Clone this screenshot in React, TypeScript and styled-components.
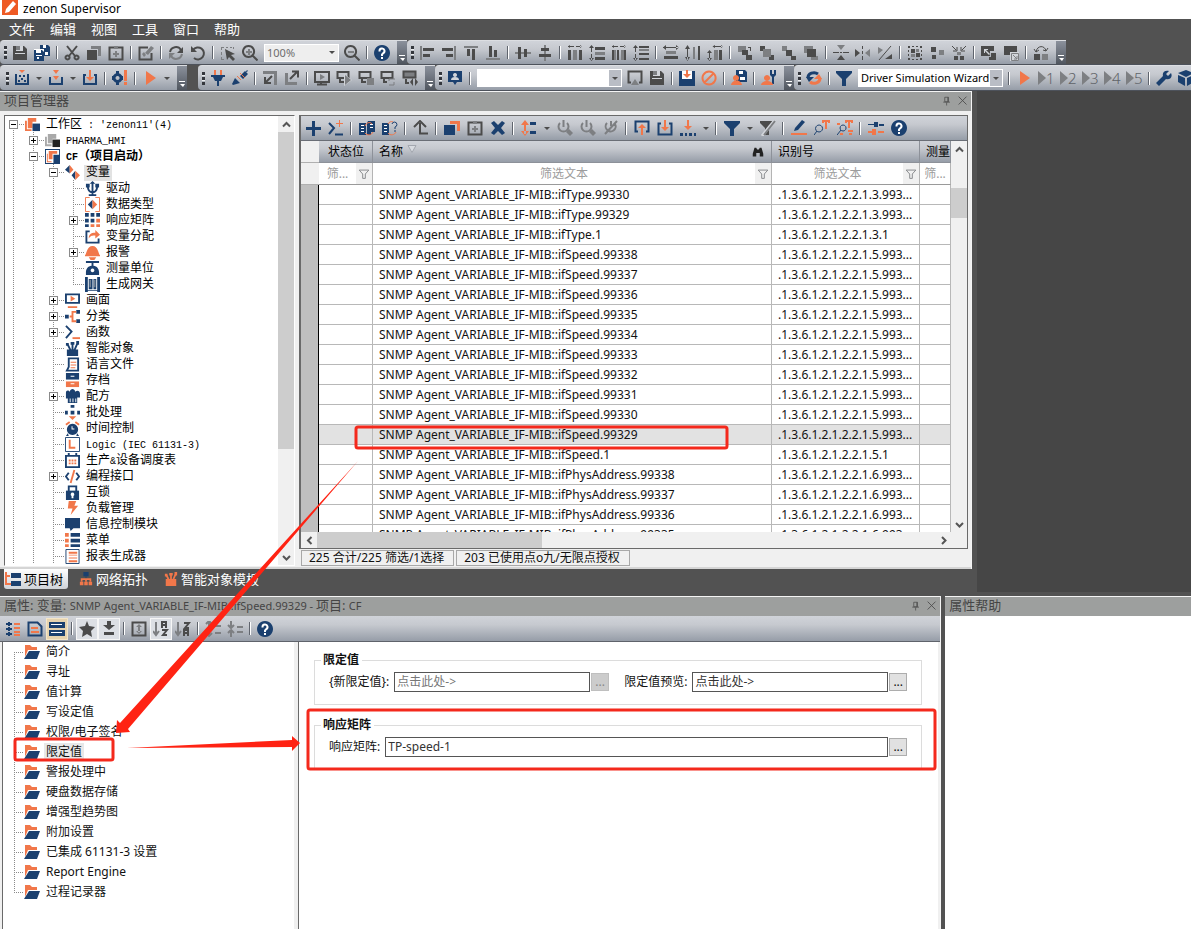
import React from "react";
import styled, { createGlobalStyle, css } from "styled-components";

const UI = `"Noto Sans", "Noto Sans CJK SC", sans-serif`;
const MONO = `"Liberation Mono", "Noto Sans CJK SC", monospace`;
const NAVY = "#1b406f";
const ORANGE = "#f1774a";
const DARK = "#4b4b4b";
const GREY = "#7d7f82";
const barFill = "linear-gradient(#d0d3d9, #c6c9cf 35%, #969da8)";

const Global = createGlobalStyle`
  * { box-sizing: border-box; }
  body { margin: 0; background: #525252; font: 12px/16px ${UI}; color: #111; overflow-x: hidden; }
  button, input, select { font: inherit; color: inherit; border-radius: 0; }
  button { padding: 0; border: 0; background: none; }
`;

/* ---------- icons: [colour, path, stroke width?] on a 16 x 16 grid ---------- */

type Shape = [string, string, number?];
const tones: Record<string, string> = {
  n: NAVY, o: ORANGE, d: DARK, g: GREY, w: "#ffffff", k: "#222222", l: "#d2d5da", a: "#a9a9a9",
};

const icons: Record<string, Shape[]> = {
  save: [["d", "M1 1h11l3 3v11H1z"], ["l", "M4 1h7v5H4zM3 8h10v1H3z"], ["g", "M4 1h4v4H4z"]],
  saveAll: [["n", "M6 0h8l2 2v9H6z"], ["w", "M9 0h3v3H9zM11 7h3v3h-3z"], ["w", "M0 4h10v12H0z"], ["n", "M0 5h8l2 2v9H0z"], ["w", "M2 5h5v3H2zM2 10h6v1H2zM3 12h2v2H3z"]],
  cut: [["d", "M3 1l8 10M13 1L5 11", 2], ["d", "M3.500 10.500a2 2 0 1 0 .1 0zM12.500 10.500a2 2 0 1 0 .1 0z", 2]],
  copy: [["g", "M5 1h10v10h-3V4H5z"], ["d", "M1 5h10v10H1z"]],
  paste: [["d", "M6 2.500H1.500v12h13v-12H10", 2], ["g", "M6 1h4v3H6zM7 6h2v2h2v2H9v2H7v-2H5V8h2z"]],
  edit: [["d", "M10 2.500H1.500v12h12V8", 2], ["g", "M4 9l2 3 2-2-2-3zM7 8l6-7 3 2-6 7z"]],
  refresh: [["d", "M2 7a6 6 0 0 1 11-2", 2], ["g", "M14 9a6 6 0 0 1-11 2", 2], ["d", "M15 2v6H9z"], ["g", "M1 14V8h6z"]],
  undo: [["d", "M3 5a6 6 0 1 1 1 8", 2], ["d", "M1 1v6h6z"]],
  pick: [["g", "M2 2h2v1H2zM6 2h2v1H6zM10 2h2v1h-2zM1 2h1v3H1zM1 7h1v3H1zM1 12h1v2h2v1H1zM13 2h1v2h-1z"], ["d", "M5 4l10 5-4 1 4 4-2 2-4-4-2 3z"]],
  zoomIn: [["d", "M6.500 1a5.500 5.500 0 1 0 .1 0zM10.500 10.500l5 5", 2], ["g", "M6 4h2v2h2v2H8v2H6V8H4V6h2z"]],
  zoomOut: [["d", "M6.500 1a5.500 5.500 0 1 0 .1 0zM10.500 10.500l5 5", 2], ["g", "M4 6h6v2H4z"]],
  help: [["n", "M8 0a8 8 0 1 0 .01 0z"], ["w", "M5.500 6.500V6a2.500 2.500 0 1 1 3.500 2.300L8 9.500V11", 2], ["w", "M7 12h2v2H7z"]],
  alLeft: [["g", "M1 1h2v14H1z"], ["d", "M4 3h11v3H4zM4 9h7v3H4z"]],
  alRight: [["g", "M13 1h2v14h-2z"], ["d", "M1 3h11v3H1zM5 9h7v3H5z"]],
  alTop: [["g", "M1 1h14v2H1z"], ["d", "M4 4h3v7H4zM9 4h3v11H9z"]],
  alBottom: [["g", "M1 13h14v2H1z"], ["d", "M4 1h3v11H4zM9 5h3v7H9z"]],
  alMidH: [["g", "M0 7h16v2H0z"], ["d", "M3 2h3v12H3zM9 4h3v8H9z"]],
  alMidV: [["g", "M7 0h2v16H7z"], ["d", "M4 3h8v3H4zM2 9h12v3H2z"]],
  dist1: [["d", "M1 1h6v1H1zM9 1h6v1H9zM3 0v3L1 1.500zM13 0v3l2-1.500z"], ["d", "M1 5h3v10H1zM12 5h3v10h-3z"], ["g", "M6 5h4v10H6z"]],
  dist2: [["d", "M2 1h1v6H2zM2 9h1v6H2zM0 3l2.500-3L5 3zM0 13l2.500 3L5 13z"], ["d", "M6 2h10v3H6zM6 12h10v3H6z"], ["g", "M6 7h10v3H6z"]],
  dist3: [["d", "M1 1h6v1H1zM9 1h6v1H9zM3 0v3L1 1.500zM13 0v3l2-1.500z"], ["d", "M1 5h2v10H1zM6 5h2v10H6zM13 5h2v10h-2z"], ["g", "M3 5h2v10H3zM10 5h3v10h-3z"]],
  dist4: [["d", "M2 1h1v6H2zM2 9h1v6H2zM0 3l2.500-3L5 3zM0 13l2.500 3L5 13z"], ["d", "M6 1h10v2H6zM6 8h10v2H6zM6 13h10v2H6z"], ["g", "M6 4h10v2H6z"]],
  wide: [["d", "M0 2h16v1H0zM3 0v5L0 2.500zM13 0v5l3-2.500z"], ["g", "M3 6h10v3H3z"], ["d", "M1 11h14v3H1z"]],
  tall: [["d", "M2 1h1v14H2zM0 4l2.500-4L5 4zM0 12l2.500 4L5 12z"], ["d", "M13 1h2v14h-2z"], ["g", "M8 2h2v12H8z"]],
  both: [["d", "M2 6h1v9H2zM0 8l2.500-3L5 8zM0 13l2.500 3L5 13zM6 1h10v1H6zM8 0v3L5.500 1.500zM14 0v3l2-1.500z"], ["g", "M7 5h4v10H7z"], ["d", "M12 5h3v10h-3z"]],
  front: [["g", "M1 1h8v6H1z"], ["d", "M5 5h6v5H5zM9 10h6v5H9zM11 2h3v4h-1V3h-2z"]],
  ord1: [["d", "M1 1h5v5H1zM10 10h5v5h-5z"], ["g", "M4 4h8v8H4z"]],
  ord2: [["g", "M1 1h5v5H1z"], ["d", "M5 5h6v6H5zM10 11h5v4h-5z"]],
  ord3: [["g", "M1 1h9v7H1zM8 11h7v4H8z"], ["d", "M4 4h9v8H4z"]],
  flipV: [["d", "M0 7h6v1H0zM7 7h2v1H7zM10 7h6v1h-6z"], ["g", "M4 0h8L8 5z"], ["d", "M8 10l4 5H4z"]],
  flipH: [["d", "M7 1h1v3H7zM7 6h1v3H7zM7 11h1v4H7z"], ["g", "M15 4v8l-5-4z"], ["d", "M0 4l5 4-5 4z"]],
  flipD: [["d", "M14 1L2 15", 1], ["g", "M1 2l5 3-5 4z"], ["d", "M8 14l7-5v5z"]],
  group: [["d", "M1 1h2v2H1zM5 1h2v1H5zM9 1h2v1H9zM13 1h2v2h-2zM1 13h2v2H1zM5 14h2v1H5zM9 14h2v1H9zM13 13h2v2h-2zM1 5h1v2H1zM1 9h1v2H1zM14 5h1v2h-1zM14 9h1v2h-1z"], ["d", "M4 4h4v4H4zM9 8h4v4H9z"], ["g", "M9 4h3v3H9zM4 9h4v3H4z"]],
  ungroup: [["d", "M2 2h5v5H2zM3 10h4v4H3z"], ["g", "M10 5h5v5h-5z"]],
  merge: [["d", "M1 1l4 4M15 1l-4 4M6 2v4H2M10 2v4h4", 1], ["g", "M6 7h4v3H6z"], ["d", "M3 11h4v4H3zM9 11h4v4H9z"]],
  swapIn: [["d", "M0 1h13v5H9v5H0z"], ["l", "M3 4h4v1H5l4 4-1 1-4-4v2H3z"], ["d", "M10 8h5v7H8v-3h2z"]],
  swapOut: [["d", "M1 1h13v9H1z"], ["l", "M7 7h9v9H7z"], ["g", "M8.500 8.500h7v7h-7zM10 10l4 4M14 11v3h-3", 1]],
  swap: [["d", "M3 7C4 0 12 0 13 6M1 4l2 3 3-2M15 3l-2 3-3-1", 1], ["d", "M1 9h6v6H1z"], ["g", "M9 9h6v6H9z"]],
  compAll: [["n", "M1 4h2v9h10V4h2v11H1zM5 5h2v2H5zM9 5h2v2H9zM7 8h2v2H7zM4 10h2v2H4zM10 10h2v2h-2z"], ["o", "M5 0h6L8 3z"]],
  compOne: [["n", "M1 7h2v6h10V7h2v8H1z"], ["o", "M5 0h6L8 4zM5 6h6L8 10z"]],
  compIn: [["n", "M1 4h3v2H3v7h10V6h-1V4h3v11H1z"], ["o", "M7 0h2v7h3l-4 4-4-4h3z"]],
  gear: [["n", "M5.500 4.500a3.500 3.500 0 1 0 .1 0z", 3], ["n", "M4 1h3v3H4zM4 12h3v3H4zM0 6h2v4H0zM9 6h2v4H9z"], ["o", "M12 0h3v11h-3zM12 12h3v3h-3z"]],
  play: [["o", "M4 1l10 7-10 7z"]],
  plug: [["o", "M4 0h2v5H4zM10 0h2v5h-2z"], ["n", "M1 5h14v2H1zM3 7h10l-2 4H9v5H7v-5H5z"]],
  unplug: [["n", "M8 6l5-5 3 3-5 5zM1 15l-1-1 3-6 5 5zM13 3l2-3 1 1z"], ["o", "M5 6l4 4M8 3l5 5", 1]],
  goIn: [["g", "M1 1h14v14h-3V4H1z"], ["d", "M10 6L4 12M3 7v6h6", 2]],
  goOut: [["g", "M1 3h3v9h9v3H1z"], ["d", "M6 9l7-7M8 1.500h6v6", 2]],
  monPlay: [["d", "M1 2h14v10H1zM7 12v2M3 14.500h10", 2], ["g", "M6 4l5 3-5 3z"]],
  monRun: [["d", "M1.500 2h11v6h-11zM4 9v3h4", 2], ["l", "M8 4l8 6-8 6z"], ["g", "M9 5l6 5-6 5z"]],
  monStop: [["d", "M1.500 2h11v6h-11zM4 9v3h4", 2], ["g", "M9 8h7v7H9z"]],
  monSync: [["d", "M1.500 2h11v6h-11zM4 9v3h3", 2], ["g", "M9 11V9h6M14 12v3H9", 1]],
  monGo: [["g", "M1 1h12v7H1z"], ["d", "M1.500 1.500h12v6h-12zM4 9v4h3", 2], ["d", "M8 12l3-4v8zM16 12l-3-4v8z"]],
  person: [["n", "M1 1h14v11h-5l-2 3-2-3H1z"], ["l", "M8 3a2 2 0 1 0 .01 0zM4 10a4 3 0 0 1 8 0z"]],
  frame: [["d", "M4 12.500H1.500v-11h13v11H12", 2], ["g", "M8 9l4 6H4z"]],
  dlBox: [["n", "M0 1h16v15H0z"], ["w", "M3 1h10v8H3z"], ["o", "M7 0h2v4h3L8 8 4 4h3z"]],
  block: [["o", "M8 1.500a6.500 6.500 0 1 0 .1 0zM3.500 12.500l9-9", 2]],
  userSave: [["n", "M5 0h9l2 2v10H5z"], ["w", "M8 1h4v3H8zM9 7h5v3H9z"], ["o", "M5 5a3 3 0 1 0 .01 0zM0 15a5 4 0 0 1 11 0z"]],
  userKey: [["n", "M9 0v5l2 2v7h2V7l2-2V0h-2v4h-2V0z"], ["o", "M6 5a3 3 0 1 0 .01 0zM0 15a6 4 0 0 1 12 0z"]],
  syncC: [["n", "M2 8a6 5 0 0 1 10-4", 3], ["n", "M0 7h8L3 12z"], ["o", "M14 8a6 5 0 0 1-10 4", 3], ["o", "M16 9H8l5-5z"]],
  funnel: [["n", "M0 1h16v2l-6 6v7H6V9L0 3z"]],
  wrench: [["n", "M0 13l7-7C6 2 9 0 13 1l-3 3 2 2 3-3c2 4-1 7-5 6l-7 7z"]],
  cube: [["n", "M8 0l8 3-8 4-8-4zM0 5l7 3v8l-7-4zM16 5l-7 3v8l7-4z"]],
  plus: [["n", "M7 1h3v6h6v3h-6v6H7v-6H1V7h6z"]],
  script: [["n", "M1 3l5 5-5 6M7 14.500h8", 2], ["o", "M11 0h1v3h3v1h-3v3h-1V4H8V3h3z"]],
  tblSync: [["n", "M0 3h7v12H0zM9 1h7v11h-4v3H8V3z"], ["w", "M2 5h3v1H2zM2 8h3v1H2zM2 11h3v1H2zM11 4h3v1h-3zM11 7h3v1h-3z"], ["o", "M6 6c1-3 5-5 7-2M14 12c-1 3-6 4-8 1", 1]],
  tblHelp: [["n", "M0 3h7v12H0z"], ["w", "M2 5h3v1H2zM2 8h3v1H2zM2 11h3v1H2z"], ["o", "M6 4c1-2 3-3 5-2M14 12c-1 3-6 4-8 1", 1], ["n", "M10 4a2.500 2.500 0 1 1 3 3v2M13 10v2", 1]],
  up: [["d", "M7 3v10.500h8", 2], ["d", "M1 7l6-6 6 6", 2]],
  dup: [["n", "M0 5h11v10H0z"], ["o", "M6 1h10v10h-3V4H6z"]],
  del: [["n", "M1 3l3-2 4 4 4-4 3 2-4 5 4 5-3 2-4-4-4 4-3-2 4-5z"]],
  expand: [["o", "M3 2h2v12H3zM0 5l4-5 4 5zM0 11l4 5 4-5z"], ["n", "M9 2h6v3H9zM9 11h6v3H9z"]],
  power: [["g", "M3 3a5 5 0 1 0 7 0M6.500 0v7", 2], ["g", "M12 9l4 4-3 3-4-4z"]],
  powerOff: [["g", "M4 3a5 5 0 1 0 8 1M8 1v5M14 1L2 14", 2]],
  export: [["n", "M4 11.500H1.500v-10h13v10H12", 2], ["o", "M7 15h2V8h3L8 4 4 8h3z"]],
  import: [["n", "M4 3.500H1.500v11h13v-11H12", 2], ["o", "M7 0h2v7h3l-4 4-4-4h3z"]],
  pullIn: [["n", "M0 13h3v3H0zM5 13h2v3H5zM9 13h3v3H9zM14 13h2v3h-2z"], ["o", "M7 0h2v6h3l-4 4-4-4h3z"]],
  noFunnel: [["d", "M0 1h12v2L9 7v8H5V8L0 3z"], ["l", "M15 0L2 16", 3], ["g", "M15 1L4 15", 2]],
  pen: [["n", "M3 11l1-3 7-8 3 2-7 8z"], ["o", "M0 13h16v2H0z"]],
  findT: [["n", "M5 5a3.500 3.500 0 1 0 .1 0zM3 11l-3 4", 1], ["o", "M8 0h8v3h-2V2h-1v7h-2V2h-1v1H8z"]],
  findR: [["o", "M8 0h8v3h-2V2h-1v6h-2V2h-1v1H8zM0 3h3v2H0zM11 10h5v2h-5zM3 13h3v2H3zM12 13h3v2h-3z"], ["n", "M6 5a3 3 0 1 0 .1 0zM4 10l-4 5", 1]],
  sliders: [["n", "M0 4h6V2h4v5H6V5H0zM11 4h5v2h-5z"], ["o", "M0 11h4V9h4v6H4v-2H0zM10 11h6v2h-6z"]],
  binoc: [["k", "M4 3h2l1 2h2l1-2h2l2 7v3h-4V9H6v4H2v-3z"]],
  thin: [["g", "M2.500 3.500h11L9.500 8v5h-3V8z", 1]],
  pin: [["d", "M5 3h5v6H5zM3 9.500h9M7.500 10v4M9 3v6", 1]],
  close: [["d", "M3 3l9 9M12 3l-9 9", 1]],
  propA: [["n", "M3 1h2v4H3zM1 2h6v2H1zM3 6h2v4H3zM1 7h6v2H1zM3 11h2v4H3zM1 12h6v2H1z"], ["o", "M9 2h6v2H9zM9 6h6v2H9zM9 10h6v2H9zM9 13h6v2H9z"]],
  propB: [["n", "M1.500 1.500h9l4 4v9h-13z", 2], ["o", "M4 6h7v2H4zM4 10h8v2H4z"]],
  propC: [["n", "M0 1h16v6H0zM0 9h16v6H0z"], ["w", "M2 3h11v1H2zM2 11h11v1H2z"]],
  star: [["d", "M8 0l2 5 6 1-4 4 1 6-5-3-5 3 1-6-4-4 6-1z"]],
  down: [["d", "M6 0h4v4h4L8 9 2 4h4zM3 11h10v3H3z"]],
  boxV: [["d", "M1.500 1.500h13v13h-13z", 2], ["g", "M7 5h2v6H7zM5 6l3-3 3 3zM5 10l3 3 3-3z"]],
  sortAZ: [["g", "M3 1v12M0 10l3 4 3-4", 2], ["d", "M9 7V1h4v6M9 4h4M9 9h5l-4 5h4", 2]],
  sortZA: [["g", "M3 1v12M0 10l3 4 3-4", 2], ["d", "M9 2h5l-4 5h4M9 15V9h4v6M9 12h4", 2]],
  colA: [["g", "M4 1v5M1 3l3-3 3 3M4 10v5M1 12l3 3 3-3M10 5h6M10 12h6", 2]],
  colB: [["g", "M4 0v6M1 4l3 3 3-3M4 16v-6M1 12l3-3 3 3M10 6h6M10 11h6", 2]],
  folder: [["o", "M1 1h5l2 2h5v3H4l-3 7z"], ["n", "M5 7h11l-3 8H0z"]],
  ws: [["o", "M3 1h9v4H8v7H3z"], ["o", "M0 4h2v9h5v2H0z"], ["n", "M8 7h8v8H8z"]],
  prj: [["a", "M3 1h9v5H8v5H3zM0 4h2v8h5v2H0z"], ["k", "M8 7h8v8H8z"]],
  prjOn: [["n", "M0 0h16v16H0z"], ["w", "M1 1h14v5h-6v9H1z"], ["o", "M4 2h9v3H8v6H4zM2 5h1v8h4v1H2z"]],
  vars: [["n", "M5 0L0 5l5 4zM11 6L7 11l4 5z"], ["o", "M5 0l4 5-4 4zM11 6l5 5-5 5z"]],
  driver: [["n", "M8 1v13M3 5c0 5 2 7 5 7s5-2 5-7M4 15h8", 2], ["n", "M5 3l3-3 3 3zM1 3h4v4H1zM11 3h4v4h-4z"]],
  dtype: [["o", "M5 .5H.5v15H5M11 .5h4.500v15H11", 1], ["n", "M8 3L3 8l5 5z"], ["o", "M8 3l5 5-5 5z"]],
  matrix: [["n", "M0 0h4v4H0zM6 0h4v4H6zM12 0h4v4h-4zM0 6h4v4H0zM6 6h4v4H6zM0 12h4v3H0z"], ["o", "M12 6h4v4h-4zM6 12h4v3H6zM12 12h4v3h-4z"]],
  alloc: [["n", "M5 2.500H1.500v12h13V10", 2], ["o", "M4 10c0-4 2-6 7-6V1l5 5-5 4V7c-3 0-5 0-7 3z"]],
  bell: [["o", "M0 11C2 9 2 1 8 1s6 8 8 10v1H0zM4 13h8l-2 3H6z"]],
  unit: [["n", "M1 0h14v2H9v3c4 0 6 4 6 7v3H1v-3c0-3 2-7 6-7V2H1z"], ["w", "M8 8a2 2 0 1 0 .01 0z"]],
  gateway: [["n", "M0 0h3v16H0zM13 0h3v16h-3zM4 2h4v11H4zM9 2h3v11H9zM2 14h12v1H2z"], ["a", "M5 3h1v8H5zM10 3h1v8h-1z"]],
  screen: [["n", "M1 1.500h14v9H1z", 2], ["o", "M6 3l5 3-5 3zM3 14h10v2H3z"]],
  classes: [["n", "M0 6h4v4H0zM12 1h4v4h-4zM12 11h4v4h-4z"], ["o", "M5 8h3M12 3H8v10h4", 2]],
  func: [["n", "M1 1l6 6-6 7", 2], ["o", "M8 13h8v2H8z"]],
  smart: [["n", "M2 9h12v7H2zM1 2h3v3H1zM6 1h4v3H6zM12 0h3v4h-3z"], ["n", "M3 4l3 6M8 3v7M13 3l-3 7", 2]],
  lang: [["n", "M4 1.500h10v13H2l2-4z", 2], ["o", "M6 5h6v1H6zM6 8h6v1H6zM6 11h5v1H6z"]],
  archive: [["n", "M1 0h14v7H1z"], ["o", "M1 9h14v6H1z"], ["w", "M6 3h4v1H6zM6 11h4v1H6z"]],
  recipe: [["n", "M3 10H1V4c0-3 3-3 4-1 1-4 5-4 6 0 2-2 5-1 5 2v4h-3v6H3z"], ["w", "M5 10h1v4H5zM8 10h1v4H8zM11 10h1v4h-1z"]],
  batch: [["n", "M6 0h4v3H6zM0 6h3v4H0zM6 6h4v4H6zM13 6h3v4h-3z"], ["o", "M4 12h8l-4 4z"]],
  clock: [["o", "M1 4l4-3M15 4l-4-3", 2], ["n", "M8 3a6 6 0 1 0 .01 0zM3 13l-2 3h3zM13 13l2 3h-3z"], ["w", "M7 5.500V9h3V8H8V5.500z"]],
  logic: [["n", "M.5 .5h15v15H.5z", 1], ["o", "M5 3v8.500h6", 2]],
  calendar: [["n", "M1 3h14v12H1zM4 0v4M12 0v4", 2], ["o", "M4 7h2v2H4zM7 7h2v2H7zM10 7h2v2h-2zM4 10h2v2H4zM7 10h2v2H7zM10 10h2v2h-2z"]],
  code: [["n", "M4 4L1 8l3 4M12 4l3 4-3 4", 2], ["o", "M10 1L6 15", 2]],
  lock: [["n", "M1 6h14v10H1z"], ["n", "M4 7V1.500h8V7", 2], ["w", "M8 8a2 2 0 0 1 1 3.700V14H7v-2.300A2 2 0 0 1 8 8z"]],
  bolt: [["o", "M4 0h8l-2 5h4L6 15l2-7H3z"]],
  message: [["n", "M0 1h16v11H9l-3 3-1-3H0z"]],
  menu: [["o", "M0 0h4v4H0zM0 6h4v4H0zM0 12h4v3H0z"], ["n", "M6 0h10v4H6zM6 6h10v4H6zM6 12h10v3H6z"]],
  report: [["n", "M1 .5h14v15H1z", 1], ["o", "M4 3h9v2H4zM4 6h9v1H4zM4 9h9v1H4zM4 12h9v2H4z"]],
  tree: [["o", "M0 1h2v11h4v2H0zM2 4h3v2H2z"], ["n", "M6 2h10v5H6zM6 10h10v5H6z"]],
  topo: [["n", "M5 0h6v5H5z"], ["n", "M8 5v4M3 11V8.500h10V11", 1], ["o", "M1 11h4v4H1zM6 11h4v4H6zM11 11h4v4h-4z"], ["o", "M3 11V8h10v3M8 8v3", 2]],
  smartO: [["o", "M2 8h12v8H2zM1 2h3v3H1zM6 1h4v3H6zM12 0h3v4h-3z"], ["o", "M3 4l3 6M8 3v7M13 3l-3 7", 2]],
};

const Svg = styled.svg<{ $size?: number }>`
  display: block;
  flex: none;
  width: ${(p) => p.$size ?? 16}px;
  height: ${(p) => p.$size ?? 16}px;
`;

const Icon = ({ name, size }: { name: string; size?: number }) => (
  <Svg viewBox="0 0 16 16" $size={size} aria-hidden="true">
    {icons[name].map(([tone, d, stroke], i) =>
      stroke ? (
        <path key={i} d={d} fill="none" stroke={tones[tone]} strokeWidth={stroke} />
      ) : (
        <path key={i} d={d} fill={tones[tone]} />
      )
    )}
  </Svg>
);

/* ---------- window frame ---------- */

const Page = styled.div`
  position: relative;
  display: flex;
  flex-direction: column;
  min-height: 100vh;
`;

const TitleBar = styled.header`
  display: flex;
  align-items: center;
  gap: 5px;
  height: 19px;
  padding: 0 2px;
  background: #fff;
  font-size: 12px;
  color: #000;
`;

const LogoMark = styled.svg`
  width: 16px;
  height: 16px;
  margin-bottom: 3px;
`;

const AppTitle = styled.h1`
  margin: 0 0 2px;
  font: inherit;
`;

const MenuBar = styled.nav`
  display: flex;
  gap: 15px;
  height: 21px;
  padding: 0 9px 2px;
  align-items: center;
`;

const MenuItem = styled.button`
  font-size: 13px;
  line-height: 18px;
  color: #fff;
`;

const ToolRow = styled.div`
  display: flex;
  height: 25px;
  border-bottom: 1px solid #4d525b;
  overflow: hidden;
`;

const LowerToolRow = styled(ToolRow)`
  height: 26px;
`;

const Bar = styled.div<{ $grow?: boolean; $inset?: number; $gap?: number }>`
  display: flex;
  align-items: center;
  flex: ${(p) => (p.$grow ? "1 0 auto" : "none")};
  margin-right: ${(p) => p.$gap ?? 0}px;
  padding-left: ${(p) => p.$inset ?? 0}px;
  background: ${barFill};
  border-top: 1px solid #dcdee2;
  border-radius: 4px 0 0 4px;
`;

const Grip = styled.span`
  width: 3px;
  height: 13px;
  margin: 0 2px 0 4px;
  background: repeating-linear-gradient(#34373d 0 3px, #eceef0 3px 4px, transparent 4px 5px);
`;

const Divider = styled.span`
  width: 2px;
  height: 13px;
  margin: 0 3px;
  background: linear-gradient(90deg, #5f646d 50%, #fff 50%);
`;

const ToolButton = styled.button<{ $wide?: boolean; $tone?: "light" | "warm" }>`
  display: flex;
  align-items: center;
  justify-content: center;
  width: ${(p) => (p.$wide ? 23 : 22)}px;
  height: 22px;
  ${(p) => p.$tone === "light" && css`background: #dcdfe4; box-shadow: inset 0 0 0 1px #f6f6f6;`}
  ${(p) => p.$tone === "warm" && css`background: #e6d3ae; box-shadow: inset 0 0 0 1px #f4e6c8;`}
`;

const NumberButton = styled(ToolButton)`
  font-size: 15px;
  font-weight: 300;
  color: #5f6368;
  justify-content: flex-start;
  padding-left: 3px;
`;

const NumberMark = styled.svg`
  width: 8px;
  height: 14px;
`;

const DropButton = styled.button<{ $wide?: boolean }>`
  width: ${(p) => (p.$wide ? 13 : 12)}px;
  height: 22px;
  display: flex;
  align-items: center;
  justify-content: center;
  &::before {
    content: "";
    border: 3px solid transparent;
    border-top-color: #4b4b4b;
    border-bottom: 0;
  }
`;

const Overflow = styled.button`
  display: flex;
  align-items: flex-end;
  justify-content: center;
  align-self: stretch;
  width: 10px;
  padding-bottom: 2px;
  margin-left: 4px;
  background: linear-gradient(#8b919c, #50565f);
`;

const OverflowMark = () => (
  <Svg viewBox="0 0 8 8" $size={8} aria-hidden="true">
    <path d="M1 1h6v1H1zM2 4h5L5 7z" fill="#fff" />
  </Svg>
);

const Combo = styled.div<{ $width: number; $muted?: boolean }>`
  position: relative;
  width: ${(p) => p.$width}px;
  height: 18px;
  margin: 0 2px 0 3px;
  border: 1px solid #fff;
  background: ${(p) => (p.$muted ? "#eeeeee" : "#ffffff")};
  color: ${(p) => (p.$muted ? "#6d6d6d" : "#000")};
`;

const ComboSelect = styled.select`
  display: block;
  appearance: none;
  width: 100%;
  height: 16px;
  padding: 0 10px 0 2px;
  border: 0;
  background: transparent;
  font-size: 11px;
  line-height: 16px;
`;

const ComboArrow = styled.span<{ $muted?: boolean }>`
  position: absolute;
  top: 0;
  right: 0;
  width: 12px;
  height: 16px;
  display: flex;
  align-items: center;
  justify-content: center;
  pointer-events: none;
  background: ${(p) => (p.$muted ? "transparent" : "#b9bdc5")};
  &::before {
    content: "";
    border: 3px solid transparent;
    border-top-color: #4b4b4b;
    border-bottom: 0;
  }
`;

const Select = ({ label, value, width, muted }: { label: string; value: string; width: number; muted?: boolean }) => (
  <Combo $width={width} $muted={muted}>
    <ComboSelect aria-label={label} defaultValue={value}>
      <option>{value}</option>
    </ComboSelect>
    <ComboArrow $muted={muted} />
  </Combo>
);

/* A tool list: "|" is a divider, "v" a drop-down arrow, anything else an icon. */
const Tools = ({ list, wide }: { list: string; wide?: boolean }) => (
  <>
    {list.split(" ").map((t, i) =>
      t === "|" ? (
        <Divider key={i} />
      ) : t === "v" ? (
        <DropButton key={i} $wide={wide} aria-label="more" />
      ) : (
        <ToolButton key={i} $wide={wide} aria-label={t}>
          <Icon name={t} />
        </ToolButton>
      )
    )}
  </>
);

const More = () => (
  <Overflow aria-label="toolbar options">
    <OverflowMark />
  </Overflow>
);

/* ---------- panels ---------- */

const Upper = styled.div`
  display: flex;
  gap: 5px;
`;

const UpperLeft = styled.div`
  flex: 972 1 0;
  min-width: 0;
`;

const Desktop = styled.main`
  flex: 214 1 0;
  background: #464646;
`;

const Panel = styled.section`
  display: flex;
  flex-direction: column;
  min-width: 0;
  border-top: 1px solid #f4f4f4;
  border-right: 1px solid #f4f4f4;
  background: #f0f0f0;
`;

const PanelTitle = styled.div`
  display: flex;
  align-items: center;
  height: 19px;
  padding: 0 0 2px 4px;
  background: #9d9f9e;
  font-size: 13px;
  line-height: 17px;
  color: #454545;
  white-space: nowrap;
  overflow: hidden;
`;

const TitleText = styled.h2`
  flex: 1;
  margin: 0;
  font: inherit;
`;

const Small = styled.span`
  font-size: 11px;
`;

const TitleButton = styled.button`
  width: 16px;
  display: flex;
  justify-content: center;
`;

const Split = styled.div`
  display: flex;
  gap: 4px;
  padding: 4px 3px 1px 4px;
  border-bottom: 2px solid #d5d5d5;
`;

const TreePane = styled.div`
  flex: none;
  display: flex;
  width: 291px;
  border: 1px solid #6a6a6a;
  border-right-color: #fff;
  border-bottom-color: #fff;
  background: #fff;
`;

const TreeList = styled.ul`
  flex: 1;
  margin: 0;
  padding: 0 0 1px;
  list-style: none;
`;

const dots = "repeating-linear-gradient(#8a8a8a 0 1px, transparent 1px 2px)";
const dotsAcross = "repeating-linear-gradient(90deg, #8a8a8a 0 1px, transparent 1px 2px)";

const TreeRow = styled.li`
  display: flex;
  align-items: center;
  height: 16px;
`;

const Guide = styled.span`
  width: 20px;
  height: 16px;
  background: ${dots} 8px 0 / 1px 16px no-repeat;
`;

const Branch = styled.span<{ $part: "full" | "top" | "bottom" }>`
  display: flex;
  align-items: center;
  width: 20px;
  height: 16px;
  padding-left: 4px;
  background:
    ${dots} 8px ${(p) => (p.$part === "bottom" ? 8 : 0)}px / 1px ${(p) => (p.$part === "full" ? 16 : 8)}px no-repeat,
    ${dotsAcross} 8px 8px / 12px 1px no-repeat;
`;

const Expander = styled.button`
  width: 9px;
  height: 9px;
  border: 1px solid #8a8a8a;
  background: #fff;
`;

const ExpanderMark = ({ open }: { open?: boolean }) => (
  <Svg viewBox="0 0 7 7" $size={7} aria-hidden="true">
    <path d={open ? "M1 3h5v1H1z" : "M1 3h5v1H1zM3 1h1v5H3z"} fill="#000" />
  </Svg>
);

const TreeLabel = styled.span<{ $bold?: boolean; $selected?: boolean }>`
  margin: 2px 0 0 4px;
  padding: 0 2px;
  font: 12px/16px ${MONO};
  font-weight: ${(p) => (p.$bold ? 700 : 400)};
  color: #000;
  white-space: pre;
  background: ${(p) => (p.$selected ? "#e2e2e2" : "none")};
`;

const Latin = styled.span`
  font-size: 10px;
`;

/* [level, icon, label, expander] */
type Node = [number, string, string, ("+" | "-")?];
const nodes: Node[] = [
  [0, "ws", "工作区 : 'zenon11'(4)", "-"],
  [1, "prj", "PHARMA_HMI", "+"],
  [1, "prjOn", "CF（项目启动）", "-"],
  [2, "vars", "变量", "-"],
  [3, "driver", "驱动"],
  [3, "dtype", "数据类型"],
  [3, "matrix", "响应矩阵", "+"],
  [3, "alloc", "变量分配"],
  [3, "bell", "报警", "+"],
  [3, "unit", "测量单位"],
  [3, "gateway", "生成网关"],
  [2, "screen", "画面", "+"],
  [2, "classes", "分类", "+"],
  [2, "func", "函数", "+"],
  [2, "smart", "智能对象"],
  [2, "lang", "语言文件"],
  [2, "archive", "存档"],
  [2, "recipe", "配方", "+"],
  [2, "batch", "批处理"],
  [2, "clock", "时间控制"],
  [2, "logic", "Logic (IEC 61131-3)"],
  [2, "calendar", "生产&设备调度表"],
  [2, "code", "编程接口", "+"],
  [2, "lock", "互锁"],
  [2, "bolt", "负载管理"],
  [2, "message", "信息控制模块"],
  [2, "menu", "菜单"],
  [2, "report", "报表生成器"],
];

const splitLatin = (text: string) =>
  text.split(/([\x20-\x7e]+)/).filter(Boolean).map((part, i) =>
    /^[\x20-\x7e]/.test(part) ? <Latin key={i}>{part}</Latin> : part
  );

/* ---------- scroll bars ---------- */

const VTrack = styled.div`
  display: flex;
  flex-direction: column;
  flex: none;
  width: 16px;
  background: #f0f0f0;
`;

const ScrollButton = styled.button`
  flex: none;
  display: flex;
  align-items: center;
  justify-content: center;
  width: 16px;
  height: 16px;
`;

const VLane = styled.div<{ $before: number; $after: number }>`
  flex: 1;
  display: flex;
  flex-direction: column;
  &::before { content: ""; flex: ${(p) => p.$before} 1 0px; }
  &::after { content: ""; flex: ${(p) => p.$after} 1 0px; }
`;

const Thumb = styled.div<{ $size: number }>`
  flex: ${(p) => p.$size} 1 0px;
  background: #cdcdcd;
`;

const HTrack = styled.div`
  flex: none;
  display: flex;
  height: 16px;
  padding-right: 16px;
  background: #f0f0f0;
`;

const HRest = styled.div<{ $size: number }>`
  flex: ${(p) => p.$size} 1 0px;
`;

const Chevron = ({ d }: { d: string }) => (
  <Svg viewBox="0 0 9 9" $size={9} aria-hidden="true">
    <path d={d} fill="none" stroke="#555" strokeWidth={2} />
  </Svg>
);
const UP = "M1 6.500l3.500-3.500L8 6.500";
const DOWN = "M1 3l3.500 3.500L8 3";
const LEFT = "M6.500 1L3 4.500 6.500 8";
const RIGHT = "M3 1l3.500 3.500L3 8";

const VScroll = ({ before, size, after }: { before: number; size: number; after: number }) => (
  <VTrack>
    <ScrollButton aria-label="up"><Chevron d={UP} /></ScrollButton>
    <VLane $before={before} $after={after}>
      <Thumb $size={size} />
    </VLane>
    <ScrollButton aria-label="down"><Chevron d={DOWN} /></ScrollButton>
  </VTrack>
);

/* ---------- variable grid ---------- */

const GridPane = styled.div`
  flex: 1;
  min-width: 0;
  display: flex;
  flex-direction: column;
`;

const GridFrame = styled.div`
  flex: 1 1 0px;
  min-height: 0;
  display: flex;
  flex-direction: column;
  border: 1px solid #6a6a6a;
  border-left-width: 2px;
`;

const GridTools = styled.div`
  flex: none;
  display: flex;
  align-items: center;
  height: 25px;
  border-bottom: 1px solid #6a6e76;
  background: ${barFill};
  overflow: hidden;
`;

const GridBody = styled.div`
  flex: 1 1 0px;
  min-height: 0;
  display: flex;
  overflow: hidden;
`;

const GridView = styled.div`
  flex: 1;
  min-width: 0;
  background: #fff;
  overflow: hidden;
`;

const Table = styled.table`
  width: 100%;
  table-layout: fixed;
  border-collapse: separate;
  border-spacing: 0;
`;

const HeadCell = styled.th`
  height: 22px;
  padding: 0 6px;
  border-right: 1px solid #8d9199;
  border-bottom: 1px solid #8d9199;
  background: ${barFill};
  text-align: left;
  font-weight: 400;
  color: #000;
  white-space: nowrap;
  overflow: hidden;
`;

const Corner = styled.td`
  padding: 0;
  background: #f0f0f0;
  border-bottom: 1px solid #b0b0b0;
`;

const HeadLine = styled.span<{ $end?: boolean }>`
  display: flex;
  align-items: center;
  justify-content: ${(p) => (p.$end ? "flex-end" : "space-between")};
  padding-right: ${(p) => (p.$end ? 2 : 0)}px;
`;

const HeadName = styled.span`
  display: flex;
  gap: 4px;
`;

const SortMark = () => (
  <Svg viewBox="0 0 10 10" $size={10} aria-hidden="true">
    <path d="M1 1.500h8L5 8.500z" fill="#d9dce1" stroke="#a3a7af" />
  </Svg>
);

const FilterCell = styled.td`
  height: 22px;
  padding: 0;
  border-right: 1px solid #b4b4b4;
  border-bottom: 1px solid #9a9a9a;
  overflow: hidden;
`;

const FilterLine = styled.div`
  display: flex;
  height: 21px;
`;

const FilterInput = styled.input`
  flex: 1;
  min-width: 0;
  width: 100%;
  padding: 0 2px;
  border: 0;
  background: transparent;
  text-align: center;
  &::placeholder { color: #9c9c9c; opacity: 1; }
`;

const FilterButton = styled.button`
  width: 16px;
  display: flex;
  align-items: center;
  justify-content: center;
  background: #f0f0f0;
`;

const RowHead = styled.td`
  padding: 0;
  background: #bfbfbf;
  border-right: 1px solid #000;
`;

const Row = styled.tr<{ $selected?: boolean }>`
  background: ${(p) => (p.$selected ? "#e2e2e2" : "#fff")};
`;

const Cell = styled.td`
  height: 20px;
  padding: 0 6px;
  border-right: 1px solid #b8b8b8;
  border-bottom: 1px solid #b8b8b8;
  line-height: 19px;
  color: #111;
  white-space: nowrap;
  overflow: hidden;
`;

const rows: [string, string][] = [
  ["ifType.99330", "3.993..."],
  ["ifType.99329", "3.993..."],
  ["ifType.1", "3.1"],
  ["ifSpeed.99338", "5.993..."],
  ["ifSpeed.99337", "5.993..."],
  ["ifSpeed.99336", "5.993..."],
  ["ifSpeed.99335", "5.993..."],
  ["ifSpeed.99334", "5.993..."],
  ["ifSpeed.99333", "5.993..."],
  ["ifSpeed.99332", "5.993..."],
  ["ifSpeed.99331", "5.993..."],
  ["ifSpeed.99330", "5.993..."],
  ["ifSpeed.99329", "5.993..."],
  ["ifSpeed.1", "5.1"],
  ["ifPhysAddress.99338", "6.993..."],
  ["ifPhysAddress.99337", "6.993..."],
  ["ifPhysAddress.99336", "6.993..."],
  ["ifPhysAddress.99335", "6.993..."],
];

const StatusBar = styled.div`
  flex: none;
  display: flex;
  gap: 2px;
  height: 17px;
  padding: 1px 2px 0;
`;

const StatusCell = styled.span`
  padding: 0 9px 0 7px;
  border: 1px solid #a8a8a8;
  line-height: 14px;
  white-space: nowrap;
`;

/* ---------- tabs ---------- */

const Tabs = styled.div`
  display: flex;
  align-items: center;
  gap: 10px;
  height: 23px;
  padding: 0 4px 3px;
`;

const Tab = styled.button<{ $active?: boolean }>`
  display: flex;
  align-items: center;
  gap: 3px;
  height: 20px;
  padding: 0 5px 0 1px;
  font-size: 13px;
  line-height: 18px;
  color: ${(p) => (p.$active ? "#000" : "#fff")};
  background: ${(p) => (p.$active ? "linear-gradient(#fff, #cfd3d8)" : "none")};
  border-radius: 0 0 3px 3px;
`;

/* ---------- properties ---------- */

const Lower = styled.div`
  flex: 1;
  display: flex;
  gap: 4px;
  margin-top: 4px;
`;

const PropPanel = styled(Panel)`
  flex: 941 1 0;
`;

const HelpPanel = styled(Panel)`
  flex: 246 1 0;
  border-right: 0;
  background: #fff;
`;

const PropTools = styled(GridTools)`
  height: 26px;
  padding-left: 2px;
  border-bottom: 1px solid #5f636b;
`;

const PropBody = styled.div`
  flex: 1;
  display: flex;
  gap: 4px;
  padding: 0 2px;
`;

const FolderPane = styled.ul`
  flex: none;
  width: 292px;
  margin: 0;
  padding: 0 0 0 11px;
  list-style: none;
  border-left: 1px solid #6a6a6a;
  background: #fff;
`;

const FolderRow = styled.li<{ $first?: boolean; $last?: boolean }>`
  display: flex;
  align-items: center;
  height: 20px;
  padding-left: 10px;
  background:
    ${dots} 0 ${(p) => (p.$first ? 10 : 0)}px / 1px ${(p) => (p.$first || p.$last ? 10 : 20)}px no-repeat,
    ${dotsAcross} 0 10px / 10px 1px no-repeat;
`;

const FolderLabel = styled.span<{ $selected?: boolean }>`
  margin-left: 4px;
  padding: 0 2px;
  line-height: 18px;
  white-space: nowrap;
  background: ${(p) => (p.$selected ? "#e8e8e8" : "none")};
`;

const folders = ["简介", "寻址", "值计算", "写设定值", "权限/电子签名", "限定值", "警报处理中", "硬盘数据存储", "增强型趋势图", "附加设置", "已集成 61131-3 设置", "Report Engine", "过程记录器"];

const FormPane = styled.div`
  flex: 1;
  min-width: 0;
  padding: 10px 16px 0 15px;
  border-left: 1px solid #6a6a6a;
  background: #fff;
`;

const Group = styled.fieldset`
  min-width: 0;
  height: 53px;
  margin: 0 0 12px;
  padding: 4px 14px 0;
  border: 1px solid #dcdcdc;
`;

const Legend = styled.legend`
  margin-left: -8px;
  padding: 0 3px 0 2px;
  font-weight: 700;
  line-height: 16px;
`;

const FieldLine = styled.div`
  display: flex;
  gap: 15px;
`;

const Field = styled.label`
  flex: 1 1 auto;
  min-width: 0;
  display: flex;
  align-items: center;
  gap: 5px;
  white-space: nowrap;
`;

const InputWrap = styled.span`
  flex: 1;
  min-width: 0;
  display: flex;
  gap: 1px;
`;

const TextInput = styled.input<{ $muted?: boolean }>`
  flex: 1;
  min-width: 0;
  width: 100%;
  height: 20px;
  padding: 0 2px 2px;
  border: 1px solid #555;
  background: #fff;
  color: ${(p) => (p.$muted ? "#777" : "#333")};
`;

const Ellipsis = styled.button`
  flex: none;
  width: 18px;
  height: 18px;
  margin-top: 1px;
  border: 1px solid #adadad;
  background: #e1e1e1;
  line-height: 16px;
  &:disabled { background: #cccccc; border-color: #bfbfbf; color: #888; }
`;

const Overlay = styled.svg`
  position: absolute;
  top: 0;
  left: 0;
  pointer-events: none;
`;

const TitleActions = () => (
  <>
    <TitleButton aria-label="pin"><Icon name="pin" size={12} /></TitleButton>
    <TitleButton aria-label="close"><Icon name="close" size={14} /></TitleButton>
  </>
);

export default function App() {
  return (
    <Page>
      <Global />
      <TitleBar>
        <LogoMark viewBox="0 0 16 16" aria-hidden="true">
          <path d="M0 0h16v15H0z" fill="#ee5a24" />
          <path d="M3 13l1-4 7-8 3 3-7 8z" fill="#fff" />
        </LogoMark>
        <AppTitle>zenon Supervisor</AppTitle>
      </TitleBar>
      <MenuBar>
        {["文件", "编辑", "视图", "工具", "窗口", "帮助"].map((m) => (
          <MenuItem key={m}>{m}</MenuItem>
        ))}
      </MenuBar>

      <ToolRow>
        <Bar>
          <Grip />
          <Tools list="save saveAll | cut copy paste | edit | refresh undo | pick zoomIn" />
          <Select label="缩放" value="100%" width={75} muted />
          <Tools list="zoomOut | help" />
          <More />
        </Bar>
        <Bar>
          <Grip />
          <Tools list="alLeft alRight alTop alBottom | alMidH alMidV | dist1 dist2 dist3 dist4 | wide tall both | front ord1 ord2 ord3 | flipV flipH flipD | group ungroup merge | swapIn swapOut | swap" />
          <More />
        </Bar>
      </ToolRow>
      <LowerToolRow>
        <Bar $inset={2} $gap={11}>
          <Grip />
          <Tools list="compAll v compOne v compIn | gear | play v" />
          <More />
        </Bar>
        <Bar>
          <Grip />
          <Tools list="plug unplug | goIn goOut | monPlay monRun monStop monSync monGo" />
          <More />
        </Bar>
        <Bar>
          <Grip />
          <Tools list="person |" />
          <Select label="配置" value="" width={145} />
          <Tools list="frame save | dlBox block | userSave | userKey" />
          <More />
        </Bar>
        <Bar $grow>
          <Grip />
          <Tools list="syncC | funnel" />
          <Select label="向导" value="Driver Simulation Wizard" width={145} />
          <Tools list="| play" />
          {[1, 2, 3, 4, 5].map((n) => (
            <NumberButton key={n}>
              <NumberMark viewBox="0 0 8 14" aria-hidden="true">
                <path d="M0 0l8 7-8 7z" fill={GREY} />
              </NumberMark>
              {n}
            </NumberButton>
          ))}
          <Tools list="| wrench cube" />
        </Bar>
      </LowerToolRow>

      <Upper>
        <UpperLeft>
          <Panel>
            <PanelTitle>
              <TitleText>项目管理器</TitleText>
              <TitleActions />
            </PanelTitle>
            <Split>
              <TreePane>
                <TreeList>
                  {nodes.map(([level, icon, label, mark], i) => (
                    <TreeRow key={label}>
                      {Array.from({ length: level }, (_, g) => <Guide key={g} />)}
                      <Branch $part={i === 0 ? "bottom" : label === "生成网关" ? "top" : "full"}>
                        {mark && (
                          <Expander aria-label="toggle">
                            <ExpanderMark open={mark === "-"} />
                          </Expander>
                        )}
                      </Branch>
                      <Icon name={icon} size={15} />
                      <TreeLabel $bold={icon === "prjOn"} $selected={icon === "vars"}>
                        {splitLatin(label)}
                      </TreeLabel>
                    </TreeRow>
                  ))}
                </TreeList>
                <VScroll before={0} size={316} after={100} />
              </TreePane>

              <GridPane>
                <GridFrame>
                  <GridTools>
                    <Tools
                      wide
                      list="plus script | tblSync tblHelp | up | dup paste del | expand v power power powerOff | export import pullIn v | funnel v noFunnel | pen findT findR | sliders help"
                    />
                  </GridTools>
                  <GridBody>
                    <GridView>
                      <Table>
                        <colgroup>
                          <col width="18" />
                          <col width="54" />
                          <col />
                          <col width="148" />
                          <col width="31" />
                        </colgroup>
                        <thead>
                          <tr>
                            <Corner />
                            <HeadCell><HeadLine $end>状态位</HeadLine></HeadCell>
                            <HeadCell>
                              <HeadLine>
                                <HeadName>名称 <SortMark /></HeadName>
                                <Icon name="binoc" size={14} />
                              </HeadLine>
                            </HeadCell>
                            <HeadCell>识别号</HeadCell>
                            <HeadCell>测量</HeadCell>
                          </tr>
                          <tr>
                            <Corner />
                            {["筛...", "筛选文本", "筛选文本", "筛..."].map((p, i) => (
                              <FilterCell key={i}>
                                <FilterLine>
                                  <FilterInput placeholder={p} aria-label={`filter ${i}`} />
                                  {i < 3 && (
                                    <FilterButton aria-label="filter"><Icon name="thin" size={14} /></FilterButton>
                                  )}
                                </FilterLine>
                              </FilterCell>
                            ))}
                          </tr>
                        </thead>
                        <tbody>
                          {rows.map(([name, id]) => (
                            <Row key={name} $selected={name === "ifSpeed.99329"}>
                              <RowHead />
                              <Cell />
                              <Cell>SNMP Agent_VARIABLE_IF-MIB::{name}</Cell>
                              <Cell>.1.3.6.1.2.1.2.2.1.{id}</Cell>
                              <Cell />
                            </Row>
                          ))}
                        </tbody>
                      </Table>
                    </GridView>
                    <VScroll before={31} size={30} after={298} />
                  </GridBody>
                  <HTrack>
                    <ScrollButton aria-label="left"><Chevron d={LEFT} /></ScrollButton>
                    <Thumb $size={224} />
                    <HRest $size={391} />
                    <ScrollButton aria-label="right"><Chevron d={RIGHT} /></ScrollButton>
                  </HTrack>
                </GridFrame>
                <StatusBar>
                  <StatusCell>225 合计/225 筛选/1选择</StatusCell>
                  <StatusCell>203 已使用点o九/无限点授权</StatusCell>
                </StatusBar>
              </GridPane>
            </Split>
          </Panel>
          <Tabs>
            <Tab $active><Icon name="tree" />项目树</Tab>
            <Tab><Icon name="topo" size={14} />网络拓扑</Tab>
            <Tab><Icon name="smartO" size={14} />智能对象模板</Tab>
          </Tabs>
        </UpperLeft>
        <Desktop />
      </Upper>

      <Lower>
        <PropPanel>
          <PanelTitle>
            <TitleText>
              属性: 变量: <Small>SNMP Agent_VARIABLE_IF-MIB::ifSpeed.99329 - </Small>项目: <Small>CF</Small>
            </TitleText>
            <TitleActions />
          </PanelTitle>
          <PropTools>
            <Tools list="propA propB" />
            <ToolButton $tone="warm" aria-label="grouped"><Icon name="propC" /></ToolButton>
            <Divider />
            <ToolButton $tone="light" aria-label="favourites"><Icon name="star" /></ToolButton>
            <ToolButton $tone="light" aria-label="collapse"><Icon name="down" /></ToolButton>
            <Tools list="| boxV" />
            <ToolButton $tone="light" aria-label="sort"><Icon name="sortAZ" /></ToolButton>
            <Tools list="sortZA | colA colB | help" />
          </PropTools>
          <PropBody>
            <FolderPane>
              {folders.map((f, i) => (
                <FolderRow key={f} $first={i === 0} $last={i === folders.length - 1}>
                  <Icon name="folder" />
                  <FolderLabel $selected={f === "限定值"}>{f}</FolderLabel>
                </FolderRow>
              ))}
            </FolderPane>
            <FormPane>
              <Group>
                <Legend>限定值</Legend>
                <FieldLine>
                  <Field>
                    {"{新限定值}:"}
                    <InputWrap>
                      <TextInput $muted defaultValue="点击此处->" />
                      <Ellipsis type="button" disabled>...</Ellipsis>
                    </InputWrap>
                  </Field>
                  <Field>
                    限定值预览:
                    <InputWrap>
                      <TextInput defaultValue="点击此处->" />
                      <Ellipsis type="button">...</Ellipsis>
                    </InputWrap>
                  </Field>
                </FieldLine>
              </Group>
              <Group>
                <Legend>响应矩阵</Legend>
                <FieldLine>
                  <Field>
                    响应矩阵:
                    <InputWrap>
                      <TextInput defaultValue="TP-speed-1" />
                      <Ellipsis type="button">...</Ellipsis>
                    </InputWrap>
                  </Field>
                </FieldLine>
              </Group>
            </FormPane>
          </PropBody>
        </PropPanel>
        <HelpPanel>
          <PanelTitle>
            <TitleText>属性帮助</TitleText>
          </PanelTitle>
        </HelpPanel>
      </Lower>

      <Overlay width="940" height="780" viewBox="0 0 940 780" aria-hidden="true">
        <g fill="none" stroke="#f4291c" strokeWidth="3">
          <rect x="356" y="427" width="371" height="21" rx="2" />
          <rect x="15" y="739" width="98" height="21" rx="2" />
          <rect x="308" y="710" width="627" height="59" rx="2" />
        </g>
        <path d="M358 461L128 729l2 3-14 1 1-13 3 3z" fill="#ff2313" />
        <path d="M127 748l165-8v-4l8 7-8 8v-4z" fill="#ff2313" />
      </Overlay>
    </Page>
  );
}
